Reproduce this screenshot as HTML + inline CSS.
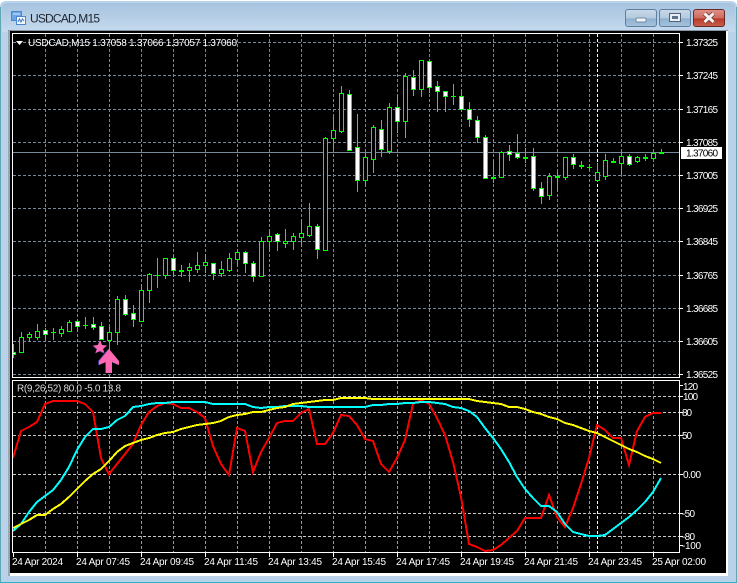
<!DOCTYPE html>
<html><head><meta charset="utf-8"><style>
html,body{margin:0;padding:0;width:737px;height:583px;overflow:hidden;background:#fff}
svg text{font-family:"Liberation Sans",sans-serif}
</style></head><body>
<svg width="737" height="583" viewBox="0 0 737 583" xmlns="http://www.w3.org/2000/svg" style="display:block">
<defs>
<linearGradient id="tb" x1="0" y1="0" x2="0" y2="1"><stop offset="0" stop-color="#a6c3df"/><stop offset="1" stop-color="#c6daee"/></linearGradient>
<linearGradient id="bt" x1="0" y1="0" x2="0" y2="1"><stop offset="0" stop-color="#c9d9e9"/><stop offset=".5" stop-color="#b3cadf"/><stop offset=".55" stop-color="#8fb0cf"/><stop offset="1" stop-color="#a6c4df"/></linearGradient>
<linearGradient id="cl" x1="0" y1="0" x2="0" y2="1"><stop offset="0" stop-color="#e0918a"/><stop offset=".5" stop-color="#cf6a5e"/><stop offset=".55" stop-color="#b9392a"/><stop offset="1" stop-color="#c9604f"/></linearGradient>
<clipPath id="mc"><rect x="13" y="34" width="666" height="343"/></clipPath>
<clipPath id="sc"><rect x="13" y="381" width="666" height="171"/></clipPath>
</defs>
<!-- window frame -->
<rect x="0" y="0" width="737" height="583" fill="#fff"/>
<path d="M0 7Q0 1 7 1H730Q737 1 737 7V583H0Z" fill="#b9d2ea"/>
<path d="M2 8Q2 3 8 3H729Q735 3 735 8V32H2Z" fill="url(#tb)"/>
<path d="M.5 7V582.5H736.5V7" fill="none" stroke="#5fa6b5"/>
<path d="M0 582.5H737" stroke="#28b4c6"/>
<rect x="8" y="30" width="720" height="546" fill="#fff"/>
<rect x="8" y="30" width="2" height="546" fill="#9aa6b2"/>
<rect x="8" y="30" width="720" height="1" fill="#8795a3"/>
<rect x="10" y="31" width="716" height="542" fill="#000"/>
<!-- title -->
<rect x="11.5" y="11.5" width="10" height="9" fill="#6aa5e6" stroke="#4a86cc"/>
<path d="M13 14h7" stroke="#d8e8f8"/>
<rect x="16.5" y="16.5" width="9" height="8" fill="#f2f7fd" stroke="#4a86cc"/>
<path d="M18 22l1.5-3 1.5 3 1.5-3 1.5 2" fill="none" stroke="#3f78bd"/>
<text x="30" y="22.500" font-size="12" fill="#1c2430" textLength="70">USDCAD,M15</text>
<!-- buttons -->
<rect x="625.5" y="9.5" width="31" height="17" rx="2.5" fill="url(#bt)" stroke="#5f7f9f"/>
<rect x="636" y="18" width="10" height="4" rx="1" fill="#f0f4f8" stroke="#5a7088" stroke-width=".7"/>
<rect x="659.5" y="9.5" width="31" height="17" rx="2.5" fill="url(#bt)" stroke="#5f7f9f"/>
<rect x="669.5" y="13.5" width="11" height="8" fill="#e8eef4" stroke="#4f6478"/>
<rect x="672" y="16" width="6" height="3" fill="#5c7288"/>
<rect x="693.5" y="9.5" width="31" height="17" rx="2.5" fill="url(#cl)" stroke="#6a2a24"/>
<path d="M704.5 13.5L713.5 22M713.5 13.5L704.5 22" stroke="#6b2a24" stroke-width="4.4"/>
<path d="M704.5 13.5L713.5 22M713.5 13.5L704.5 22" stroke="#f4f2f0" stroke-width="3"/>
<!-- panel borders -->
<path d="M12.5 33.5H679.5V377.5H12.5Z" fill="none" stroke="#fff"/>
<path d="M12.5 380.5H679.5V552.5H12.5Z" fill="none" stroke="#fff"/>
<!-- main grid -->
<g clip-path="url(#mc)">
<path d="M13 42.5H679M13 75.5H679M13 109.5H679M13 142.5H679M13 175.5H679M13 208.5H679M13 241.5H679M13 275.5H679M13 308.5H679M13 341.5H679M13 374.5H679" stroke="#778899" stroke-dasharray="3 2" fill="none"/>
<path d="M45.5 34V377M77.5 34V377M109.5 34V377M141.5 34V377M173.5 34V377M205.5 34V377M237.5 34V377M269.5 34V377M301.5 34V377M333.5 34V377M365.5 34V377M397.5 34V377M429.5 34V377M461.5 34V377M493.5 34V377M525.5 34V377M557.5 34V377M589.5 34V377M621.5 34V377M653.5 34V377" stroke="#778899" stroke-dasharray="3 2" fill="none"/>
<path d="M597.5 34V377" stroke="#fff" stroke-dasharray="3 2" fill="none"/>
<path d="M13 152.5H679" stroke="#778899" fill="none"/>
<!-- wicks -->
<path fill="none" stroke="#0f0" d="M13.5 344V358M21.5 332V352M29.5 332V342M37.5 324V340M45.5 328V341M53.5 328V340M61.5 326V337M69.5 320V331M77.5 321V331M85.5 317V329M93.5 317V330M101.5 322V340M109.5 327V350M117.5 296V345M125.5 295V316M133.5 305V327M141.5 284V321M149.5 273V303M157.5 258V288M165.5 258V279M173.5 255V277M181.5 265V277M189.5 263V282M197.5 252V273M205.5 254V273M213.5 263V280M221.5 261V277M229.5 253V272M237.5 250V266M245.5 251V273M253.5 261V282M261.5 237V276M269.5 231V251M277.5 233V251M285.5 229V248M293.5 233V250M301.5 220V247M309.5 203V237M317.5 224V259M325.5 137V250M333.5 117V150M341.5 86V133M349.5 90V150M357.5 114V192M365.5 153V187M373.5 125V173M381.5 120V157M389.5 103V154M397.5 95V133M405.5 73V138M413.5 70V96M421.5 60V97M429.5 61V93M437.5 81V112M445.5 91V112M453.5 84V105M461.5 92V112M469.5 102V127M477.5 116V143M485.5 135V179M493.5 160V183M501.5 151V178M509.5 145V161M517.5 134V159M525.5 148V163M533.5 148V191M541.5 182V204M549.5 173V200M557.5 172V192M565.5 157V180M573.5 154V169M581.5 161V169M589.5 164V170M597.5 163V182M605.5 154V180M613.5 158V163M621.5 151V174M629.5 154V166M637.5 156V163M645.5 154V161M653.5 151V158M661.5 149V153"/>
<!-- black bodies -->
<path fill="none" stroke="#0f0" stroke-width="5" d="M21.5 337V353M29.5 334V338M37.5 331V338M61.5 329V334M69.5 322V332M109.5 332V341M117.5 299V333M141.5 290V322M149.5 274V291M165.5 258V276M189.5 267V271M197.5 265V270M205.5 262V266M221.5 269V274M229.5 258V271M237.5 252V260M261.5 241V277M269.5 236V242M285.5 241V244M293.5 236V242M301.5 233V238M309.5 226V236M325.5 138V251M333.5 130V139M341.5 93V132M365.5 157V181M373.5 127V160M389.5 107V152M405.5 76V122M421.5 60V90M501.5 152V178M549.5 176V196M565.5 157V178M597.5 172V181M605.5 160V177M621.5 156V164M637.5 157V162M653.5 153V159"/>
<path fill="none" stroke="#000" stroke-width="3" d="M21.5 338V352M29.5 335V337M37.5 332V337M61.5 330V333M69.5 323V331M109.5 333V340M117.5 300V332M141.5 291V321M149.5 275V290M165.5 259V275M189.5 268V270M197.5 266V269M205.5 263V265M221.5 270V273M229.5 259V270M237.5 253V259M261.5 242V276M269.5 237V241M285.5 242V243M293.5 237V241M301.5 234V237M309.5 227V235M325.5 139V250M333.5 131V138M341.5 94V131M365.5 158V180M373.5 128V159M389.5 108V151M405.5 77V121M421.5 61V89M501.5 153V177M549.5 177V195M565.5 158V177M597.5 173V180M605.5 161V176M621.5 157V163M637.5 158V161M653.5 154V158"/>
<!-- white bodies -->
<path fill="none" stroke="#0f0" stroke-width="5" d="M13.5 352V355M45.5 330V335M77.5 321V327M93.5 324V328M101.5 326V340M125.5 299V315M133.5 313V320M173.5 258V271M213.5 263V274M245.5 252V264M253.5 263V277M277.5 234V242M317.5 226V250M349.5 94V151M357.5 147V181M381.5 129V150M397.5 107V122M413.5 77V90M429.5 61V88M437.5 86V92M445.5 91V97M461.5 96V110M469.5 109V120M477.5 120V138M485.5 137V179M509.5 151V155M517.5 153V158M533.5 156V189M541.5 188V197M573.5 157V165M629.5 156V165"/>
<path fill="none" stroke="#fff" stroke-width="3" d="M13.5 353V354M45.5 331V334M77.5 322V326M93.5 325V327M101.5 327V339M125.5 300V314M133.5 314V319M173.5 259V270M213.5 264V273M245.5 253V263M253.5 264V276M277.5 235V241M317.5 227V249M349.5 95V150M357.5 148V180M381.5 130V149M397.5 108V121M413.5 78V89M429.5 62V87M437.5 87V91M445.5 92V96M461.5 97V109M469.5 110V119M477.5 121V137M485.5 138V178M509.5 152V154M517.5 154V157M533.5 157V188M541.5 189V196M573.5 158V164M629.5 157V164"/>
<!-- doji -->
<path fill="none" stroke="#0f0" stroke-width="5" d="M53.5 332V333M85.5 325V326M157.5 275V276M181.5 270V272M453.5 96V97M493.5 177V179M525.5 157V159M557.5 176V178M581.5 165V167M589.5 167V168M613.5 161V163M645.5 157V159M661.5 152V154"/>
</g>
<!-- markers -->
<polygon points="100,340 102,345 107,345.500 103,349 104.500,353 100,351 95.500,353 97,349 93,345.500 98,345" fill="#3d2f80" transform="translate(-.6 .6)"/>
<polygon points="100,340 102,345 107,345.500 103,349 104.500,353 100,351 95.500,353 97,349 93,345.500 98,345" fill="#ff69b4"/>
<polygon points="109,349 119,361 119,365 112,362 112,373 106,373 106,362 99,365 99,361" fill="#3a3aa0" transform="translate(-1 0)"/>
<polygon points="109,349 119,361 119,365 112,362 112,373 106,373 106,362 99,365 99,361" fill="#ff69b4"/>
<!-- sub grid -->
<g clip-path="url(#sc)">
<path d="M13 396.5H679M13 412.5H679M13 435.5H679M13 474.5H679M13 513.5H679M13 536.5H679" stroke="#c8c8c8" stroke-dasharray="3 2" fill="none"/>
<path d="M45.500 381V552M77.500 381V552M109.500 381V552M141.500 381V552M173.500 381V552M205.500 381V552M237.500 381V552M269.500 381V552M301.500 381V552M333.500 381V552M365.500 381V552M397.500 381V552M429.500 381V552M461.500 381V552M493.500 381V552M525.500 381V552M557.500 381V552M589.500 381V552M621.500 381V552M653.500 381V552" stroke="#9a9a9a" stroke-dasharray="3 2" fill="none"/>
<path d="M597.500 381V552" stroke="#fff" stroke-dasharray="3 2" fill="none"/>
</g>
<g clip-path="url(#sc)" fill="none" stroke-width="2" stroke-linejoin="miter" shape-rendering="crispEdges">
<polyline stroke="#f00" points="13,458 21,431 29,427 37,422 45,404 53,401 61,401 69,401 77,401 85,404 93,412 101,458 109,474 117,464 125,454 133,444 141,425 149,412 157,406 165,403 173,404 181,408 189,408 197,412 205,418 213,446 221,464 229,475 237,428 245,431 253,472 261,452 269,438 277,423 285,421 293,421 301,413 309,409 317,444 325,444 333,433 341,415 349,416 357,425 365,439 373,441 381,464 389,472 397,458 405,440 413,404 421,400 429,404 437,418 445,435 453,462 461,497 469,544 477,547 485,551 493,550 501,545 509,538 517,531 525,518 533,518 541,518 549,495 557,517 565,527 573,508 581,484 589,458 597,425 605,430 613,438 621,438 629,465 637,431 645,417 653,413 661,413"/>
<polyline stroke="#0ff" points="13,531 21,524 29,512 37,502 45,496 53,490 61,480 69,467 77,450 85,437 93,429 101,429 109,427 117,420 125,416 133,407 141,406 149,404 157,403 165,403 173,402 181,402 189,402 197,402 205,402 213,404 221,404 229,404 237,404 245,404 253,407 261,408 269,407 277,407 285,406 293,406 301,406 309,407 317,407 325,407 333,407 341,407 349,407 357,407 365,407 373,405 381,405 389,404 397,404 405,403 413,403 421,402 429,402 437,403 445,404 453,407 461,408 469,411 477,417 485,428 493,438 501,449 509,462 517,477 525,489 533,498 541,506 549,506 557,512 565,524 573,532 581,534 589,536 597,536 605,535 613,529 621,523 629,517 637,510 645,502 653,492 661,478"/>
<polyline stroke="#ff0" points="13,528 21,524 29,520 37,515 45,515 53,509 61,504 69,497 77,489 85,481 93,474 101,469 109,461 117,452 125,446 133,443 141,440 149,438 157,435 165,433 173,432 181,429 189,427 197,425 205,424 213,423 221,421 229,417 237,415 245,414 253,412 261,412 269,410 277,408 285,407 293,404 301,403 309,402 317,401 325,400 333,400 341,398 349,398 357,398 365,398 373,399 381,399 389,399 397,399 405,399 413,399 421,399 429,399 437,399 445,399 453,399 461,399 469,399 477,401 485,402 493,403 501,404 509,407 517,407 525,409 533,412 541,414 549,417 557,419 565,423 573,425 581,428 589,431 597,433 605,437 613,441 621,445 629,449 637,452 645,456 653,459 661,463"/>
</g>
<!-- ticks -->
<path stroke="#fff" fill="none" d="M680 42.500h3M680 75.500h3M680 109.500h3M680 142.500h3M680 175.500h3M680 208.500h3M680 241.500h3M680 275.500h3M680 308.500h3M680 341.500h3M680 374.500h3M680 385.500h3M680 396.500h3M680 412.500h3M680 435.500h3M680 474.500h3M680 513.500h3M680 536.500h3M680 545.500h3M13.500 553v4M77.500 553v4M141.500 553v4M205.500 553v4M269.500 553v4M333.500 553v4M397.500 553v4M461.500 553v4M525.500 553v4M589.500 553v4M653.500 553v4"/>
<!-- header -->
<polygon points="16,41 23,41 19.500,45" fill="#fff"/>
<g font-size="10" fill="#fff">
<text x="28" y="46" textLength="209">USDCAD,M15  1.37058 1.37066 1.37057 1.37060</text>
<text x="17" y="391.500" textLength="104" fill="#dcdcdc">R(9,26,52) 80.0 -5.0 13.8</text>
<!-- price scale -->
<text x="686" y="46" textLength="32">1.37325</text>
<text x="686" y="79" textLength="32">1.37245</text>
<text x="686" y="113" textLength="32">1.37165</text>
<text x="686" y="146" textLength="32">1.37085</text>
<text x="686" y="179" textLength="32">1.37005</text>
<text x="686" y="212" textLength="32">1.36925</text>
<text x="686" y="245" textLength="32">1.36845</text>
<text x="686" y="279" textLength="32">1.36765</text>
<text x="686" y="312" textLength="32">1.36685</text>
<text x="686" y="345" textLength="32">1.36605</text>
<text x="686" y="378" textLength="32">1.36525</text>
<text x="683" y="390" textLength="15">120</text>
<text x="683" y="400" textLength="15">100</text>
<text x="682" y="416" textLength="10">80</text>
<text x="682" y="439" textLength="10">50</text>
<text x="683" y="478" textLength="18">0.00</text>
<text x="682" y="517" textLength="13">-50</text>
<text x="682" y="540" textLength="13">-80</text>
<text x="682" y="549" textLength="19">-100</text>
<!-- time scale -->
<text x="12" y="565" textLength="51">24 Apr 2024</text>
<text x="76" y="565" textLength="54">24 Apr 07:45</text>
<text x="140" y="565" textLength="54">24 Apr 09:45</text>
<text x="204" y="565" textLength="54">24 Apr 11:45</text>
<text x="268" y="565" textLength="54">24 Apr 13:45</text>
<text x="332" y="565" textLength="54">24 Apr 15:45</text>
<text x="396" y="565" textLength="54">24 Apr 17:45</text>
<text x="460" y="565" textLength="54">24 Apr 19:45</text>
<text x="524" y="565" textLength="54">24 Apr 21:45</text>
<text x="588" y="565" textLength="54">24 Apr 23:45</text>
<text x="652" y="565" textLength="54">25 Apr 02:00</text>
</g>
<rect x="681" y="147" width="41" height="12" fill="#fff"/>
<text x="686" y="156.500" font-size="10" fill="#000" textLength="32">1.37060</text>
</svg>
</body></html>
